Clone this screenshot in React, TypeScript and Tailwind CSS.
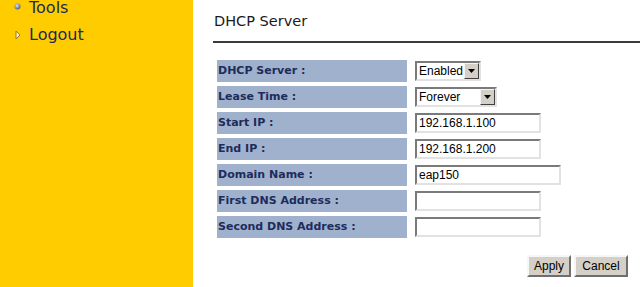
import React from "react";

const inset =
  "border-2 border-t-[#7a7a7a] border-l-[#7a7a7a] border-b-[#e2e2e2] border-r-[#e2e2e2] bg-white";

function TextBox({ w, value }: { w: string; value?: string }) {
  return (
    <div
      className={`${inset} ${w} h-[20px] flex items-center pl-[2px] text-[12px] leading-[16px] text-black`}
      style={{ fontFamily: '"Liberation Sans", Arial, sans-serif' }}
    >
      {value}
    </div>
  );
}

function Select({ w, value }: { w: string; value: string }) {
  return (
    <div
      className={`${inset} ${w} h-[20px] flex items-stretch text-[12px] leading-[16px] text-black`}
      style={{ fontFamily: '"Liberation Sans", Arial, sans-serif' }}
    >
      <span className="flex-1 pl-[2px] flex items-center">{value}</span>
      <div className="w-[15px] bg-[#d4d0c8] border border-t-[#f4f4f4] border-l-[#f4f4f4] border-b-[#404040] border-r-[#404040] flex items-center justify-center">
        <svg width="7" height="4" viewBox="0 0 7 4">
          <polygon points="0,0 7,0 3.5,4" fill="#000" />
        </svg>
      </div>
    </div>
  );
}

function Button({ w, label }: { w: string; label: string }) {
  return (
    <div
      className={`${w} h-[22px] bg-[#d4d0c8] border-2 border-t-[#f6f6f6] border-l-[#f6f6f6] border-b-[#6e6e6e] border-r-[#6e6e6e] flex items-center justify-center text-[12px] text-black`}
      style={{ fontFamily: '"Liberation Sans", Arial, sans-serif' }}
    >
      {label}
    </div>
  );
}

const rows: { label: string; field: React.ReactNode }[] = [
  { label: "DHCP Server :", field: <Select w="w-[66px]" value="Enabled" /> },
  { label: "Lease Time :", field: <Select w="w-[82px]" value="Forever" /> },
  { label: "Start IP :", field: <TextBox w="w-[126px]" value="192.168.1.100" /> },
  { label: "End IP :", field: <TextBox w="w-[126px]" value="192.168.1.200" /> },
  { label: "Domain Name :", field: <TextBox w="w-[146px]" value="eap150" /> },
  { label: "First DNS Address :", field: <TextBox w="w-[126px]" /> },
  { label: "Second DNS Address :", field: <TextBox w="w-[126px]" /> },
];

export default function App() {
  return (
    <div
      className="flex w-[640px] h-[287px] overflow-hidden bg-white"
      style={{ fontFamily: '"DejaVu Sans", Verdana, sans-serif' }}
    >
      <aside className="w-[193px] shrink-0 bg-[#ffcc00] pl-[14px]">
        <div className="flex flex-col gap-[12px] text-[16px] leading-[15px] text-[#1b2a55]">
          <div className="flex items-center gap-[8px]">
            <svg width="7" height="7" viewBox="0 0 7 7" className="mt-[-2px]">
              <defs>
                <radialGradient id="ball" cx="0.4" cy="0.35" r="0.6">
                  <stop offset="0" stopColor="#dfe4ee" />
                  <stop offset="1" stopColor="#5b6786" />
                </radialGradient>
              </defs>
              <circle cx="3.5" cy="3.5" r="3" fill="url(#ball)" />
            </svg>
            <span>Tools</span>
          </div>
          <div className="flex items-center gap-[8px]">
            <svg width="7" height="10" viewBox="0 0 7 10">
              <polygon
                points="2,1 6,5 2,9"
                fill="#fff3b8"
                stroke="#a0782a"
                strokeWidth="1"
              />
            </svg>
            <span>Logout</span>
          </div>
        </div>
      </aside>

      <main className="flex-1 pl-[20px]">
        <div className="pt-[13px] pl-[1px] text-[14.5px] leading-[17px] text-[#1a1a1a] mb-[11px]">
          DHCP Server
        </div>
        <div className="h-[2px] bg-[#3a3a3a]" />
        <div className="mt-[17px] ml-[4px] grid grid-cols-[190px_1fr] gap-x-[8px] gap-y-[4px]">
          {rows.map((r) => (
            <React.Fragment key={r.label}>
              <div className="h-[22px] bg-[#9fb1cc] pl-[1px] flex items-center text-[11px] font-bold text-[#1d2c5b]">
                {r.label}
              </div>
              <div className="h-[22px] flex items-center">{r.field}</div>
            </React.Fragment>
          ))}
        </div>
        <div className="mt-[17px] flex justify-end gap-[3px] pr-[12px]">
          <Button w="w-[44px]" label="Apply" />
          <Button w="w-[54px]" label="Cancel" />
        </div>
      </main>
    </div>
  );
}
